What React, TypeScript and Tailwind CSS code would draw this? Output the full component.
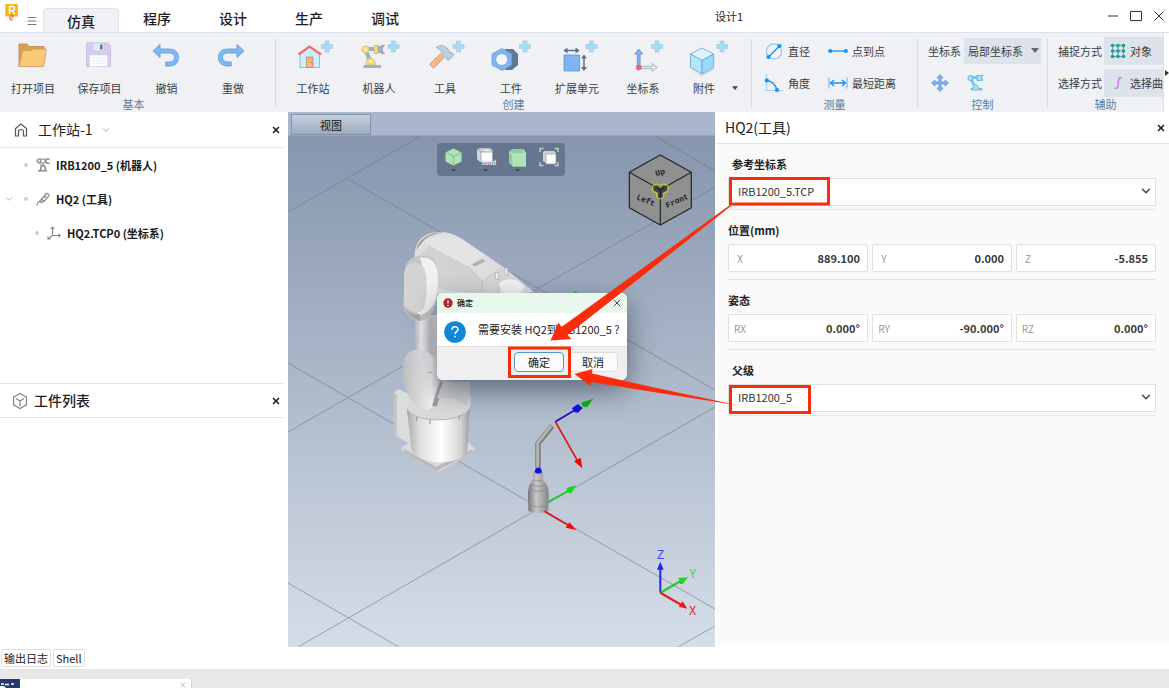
import React from "react";
import { ChevronDown, Menu, X } from "lucide-react";

type Kids = { children: React.ReactNode };

/* ---------- Ribbon icons, all on a 40 x 36 canvas ---------- */

function Plus({ x }: { x: number }) {
  return (
    <path
      transform={`translate(${x} 8.5)`}
      d="M-2-5.5h4v3.5h3.5v4H2v3.5h-4V2h-3.5v-4H-2z"
      fill="#a5dcf5"
      stroke="#a9c9dd"
      strokeWidth=".7"
    />
  );
}

function BigIcon({ children }: Kids) {
  return (
    <svg viewBox="0 0 40 36" className="h-9 w-10 shrink-0 overflow-visible" aria-hidden="true">
      {children}
    </svg>
  );
}

const folderIcon = (
  <BigIcon>
    <path d="M6 6h8l2 2.500h15v6H8.500L6 28.500z" fill="#dda14c" stroke="#b98a4a" strokeWidth=".8" />
    <path d="M9.500 12.500h9l2-1.500h12.800l-2.600 17.500H6z" fill="#fdc873" stroke="#c39a5c" strokeWidth=".8" />
  </BigIcon>
);

const saveIcon = (
  <BigIcon>
    <path d="M6.500 5h21l3 3v20.500h-24z" fill="#d9cbef" stroke="#c2b5dc" strokeWidth=".8" />
    <path d="M13 5h11v8H13z" fill="#dcebf4" stroke="#b5c5d6" strokeWidth=".6" />
    <path d="M20 6.500h2.500v5H20z" fill="#5d7590" />
    <path d="M9.500 17h18v11.500h-18z" fill="#fff" stroke="#cdd5e2" strokeWidth=".6" />
    <path d="M11.500 20h14M11.500 22.500h14M11.500 25h14" stroke="#dfe6ef" strokeWidth=".8" />
  </BigIcon>
);

const turnArrow = "M6 13l7-6.500v4.500h9.500c5.500 0 9 3.500 9 8.500s-3.500 8.500-9 8.500h-3.700v-4h3.500c3.300 0 5.200-1.700 5.200-4.500s-2-4.500-5.200-4.500H13v4.500z";

const undoIcon = (
  <BigIcon>
    <path d={turnArrow} fill="#7fb9f5" stroke="#5a94d2" strokeWidth=".8" />
  </BigIcon>
);

const redoIcon = (
  <BigIcon>
    <path transform="translate(37 0) scale(-1 1)" d={turnArrow} fill="#7fb9f5" stroke="#5a94d2" strokeWidth=".8" />
  </BigIcon>
);

const stationIcon = (
  <BigIcon>
    <path d="M7 16L16.500 9l10 7v13.500H7z" fill="#cdeefb" stroke="#8fb4cc" strokeWidth=".9" />
    <path d="M5.500 16.500l11-8 11.500 8" fill="none" stroke="#ee6b72" strokeWidth="2.200" />
    <path d="M13.500 19h6.500v10.500h-6.500z" fill="#fbb583" stroke="#b98462" strokeWidth=".8" />
    <circle cx="18.500" cy="24.500" r=".6" fill="#8a5a3c" />
    <Plus x={34} />
  </BigIcon>
);

const robotIcon = (
  <BigIcon>
    <path d="M7 11h12M7 13l5 12" stroke="#9fb1c2" strokeWidth="4" />
    <path d="M19 8.500h2c1-1 2.500-1.500 4.500-1l-2 2.400v3.200l2 2.400c-2 .5-3.500 0-4.500-1h-2z" fill="#9fb1c2" stroke="#8fa3b5" strokeWidth=".8" />
    <path d="M15 7.500h4v8h-4z" fill="#f6dc7c" stroke="#c9b268" strokeWidth=".7" />
    <circle cx="6.500" cy="11.500" r="3.600" fill="#f6dc7c" stroke="#c9b268" strokeWidth=".7" />
    <circle cx="6.500" cy="11.500" r="1.100" fill="#fff" />
    <path d="M7 27c0-5 2-7 4.500-7s4.500 2 5 7z" fill="#f6dc7c" stroke="#c9b268" strokeWidth=".7" />
    <circle cx="11.500" cy="23.500" r="1.100" fill="#fff" />
    <path d="M4.500 27h17.500v3H4.500z" fill="#9fb1c2" />
    <Plus x={34.5} />
  </BigIcon>
);

const toolIcon = (
  <BigIcon>
    <path d="M15.500 15.500l4 4L8.500 30.300 4.500 26.500z" fill="#fbb583" stroke="#cf9670" strokeWidth=".8" />
    <path d="M11 9.500c3-2.500 8-2.500 11 .5l3 4.500 2.500.5 1 2-4.500 5-2.500-.5-.5-2.500-3.500-3c-1-3-3.500-5.500-6.500-6.500z" fill="#b9d1dd" stroke="#8ea9b8" strokeWidth=".8" />
    <Plus x={33.5} />
  </BigIcon>
);

const partIcon = (
  <BigIcon>
    <path d="M14 11h8l5 5v11l-6 5h-7z" fill="#5f7a96" />
    <path d="M11 10.500l9.500 5.500v11L11 32.500 1 27V16z" fill="#7fb5f5" stroke="#6c9fdc" strokeWidth=".8" />
    <circle cx="10.800" cy="21.500" r="6" fill="#f2f5fa" stroke="#6f9fd6" strokeWidth=".8" />
    <Plus x={34} />
  </BigIcon>
);

const unitIcon = (
  <BigIcon>
    <path d="M7 17h15.500v16H7z" fill="#7fb5f5" stroke="#6590c4" strokeWidth=".8" />
    <path d="M7.500 12.500h14M27 18v13.500" stroke="#587089" strokeWidth="1.500" />
    <path d="M6.500 12.500L10.500 9.500v6zM22.500 12.500l-4-3v6zM27 16.500l-3 4h6zM27 33l-3-4h6z" fill="#587089" />
    <Plus x={34.5} />
  </BigIcon>
);

const frameIcon = (
  <BigIcon>
    <path d="M14.300 29V16h-2.600L15.700 11l4 5h-2.600v13z" fill="#7fb5f5" stroke="#5c8dc8" strokeWidth=".8" />
    <path d="M18 28.300h11v-2.800l5.500 4-5.500 4v-2.800H18z" fill="#e2ebf2" stroke="#94a9b8" strokeWidth=".8" />
    <circle cx="15.700" cy="29.700" r="2.400" fill="#f4606b" stroke="#d94f5b" strokeWidth=".6" />
    <Plus x={34} />
  </BigIcon>
);

const accessoryIcon = (
  <BigIcon>
    <path d="M17.500 37l12-6.500 1 1L17.500 38.500 6 32z" fill="#c9ced4" opacity=".7" />
    <path d="M18 10l11.700 6L18 22.500 6.500 16z" fill="#dff4fd" stroke="#6ba3c2" strokeWidth=".8" />
    <path d="M6.500 16L18 22.500V36L6.500 29.500z" fill="#b5e5fb" stroke="#6ba3c2" strokeWidth=".8" />
    <path d="M29.700 16L18 22.500V36l11.700-6.500z" fill="#98d8f8" stroke="#6ba3c2" strokeWidth=".8" />
    <Plus x={38} />
  </BigIcon>
);

function SmallIcon({ children }: Kids) {
  return (
    <svg viewBox="0 0 20 20" className="size-5 shrink-0" aria-hidden="true">
      {children}
    </svg>
  );
}

const diameterIcon = (
  <SmallIcon>
    <circle cx="10" cy="10.500" r="7.700" fill="none" stroke="#8fc4ee" strokeWidth="1.200" />
    <path d="M4.500 16L15.500 5" stroke="#1492f5" strokeWidth="1.400" />
    <circle cx="4.500" cy="16" r="2.100" fill="#1492f5" />
    <circle cx="15.500" cy="5" r="2.100" fill="#1492f5" />
  </SmallIcon>
);

const angleIcon = (
  <SmallIcon>
    <path d="M2.500 1v16.500H19" fill="none" stroke="#a9cdec" strokeWidth="1.200" />
    <path d="M2.500 7.500C9 8.500 12 11.500 13 17.500" fill="none" stroke="#1492f5" strokeWidth="1.400" />
    <circle cx="2.800" cy="7.500" r="2.100" fill="#1492f5" />
    <circle cx="13" cy="17" r="2.100" fill="#1492f5" />
  </SmallIcon>
);

const pointIcon = (
  <SmallIcon>
    <path d="M2 10h16" stroke="#1492f5" strokeWidth="1.300" />
    <circle cx="2.200" cy="10" r="2.100" fill="#1492f5" />
    <circle cx="17.800" cy="10" r="2.100" fill="#1492f5" />
  </SmallIcon>
);

const distanceIcon = (
  <SmallIcon>
    <path d="M1 4.500v11M19 4.500v11" stroke="#7fb9e8" strokeWidth="1.200" />
    <path d="M3 10h14M6 7l-3.500 3L6 13M14 7l3.500 3-3.500 3" fill="none" stroke="#1492f5" strokeWidth="1.300" />
  </SmallIcon>
);

const moveIcon = (
  <SmallIcon>
    <path
      d="M10 1.500l3 3.500h-2v4h4V7l3.500 3-3.500 3v-2h-4v4h2l-3 3.500L7 15h2v-4H5v2l-3.500-3L5 7v2h4V5H7z"
      fill="#7fb5f0"
      stroke="#5f94d0"
      strokeWidth=".8"
    />
  </SmallIcon>
);

const jogIcon = (
  <SmallIcon>
    <path d="M5 4.500h10M5 6l4 8" stroke="#7cc6ea" strokeWidth="2.800" />
    <path d="M5 17v-1.500h2c0-3 1-4 2.500-4s2.500 1 2.800 4H16V17z" fill="#a6def5" stroke="#5eaed6" strokeWidth=".8" />
    <circle cx="4.500" cy="5" r="2.600" fill="#a6def5" stroke="#5eaed6" strokeWidth=".9" />
    <path d="M11 2.500h3.500l2.500-.5-1.500 2.500 1.500 2.500-3 .5h-3z" fill="#a6def5" stroke="#5eaed6" strokeWidth=".9" />
  </SmallIcon>
);

const gridIcon = (
  <svg viewBox="0 0 16 16" className="size-4 shrink-0" aria-hidden="true">
    <path d="M2.500 2.500h11v11h-11zM8 2.500v11M2.500 8h11" fill="none" stroke="#58a3b0" strokeWidth="1" />
    {[2.5, 8, 13.5].map((y) => [2.5, 8, 13.5].map((x) => <circle key={`${x}-${y}`} cx={x} cy={y} r="1.800" fill="#14a395" />))}
  </svg>
);

const curveIcon = (
  <svg viewBox="0 0 16 16" className="size-4 shrink-0" aria-hidden="true">
    <path d="M4.500 13c3 1 4-.5 3.800-5-.2-4.500.7-6 3.700-5" fill="none" stroke="#cf86ee" strokeWidth="1.700" />
  </svg>
);

/* ---------- Ribbon ---------- */

function RibbonButton({ icon, label, size }: { icon: React.ReactNode; label: string; size: string }) {
  return (
    <button type="button" className={`flex shrink-0 flex-col items-center ${size}`}>
      {icon}
      <span className="mt-1.5 text-[11px] leading-4 whitespace-nowrap text-[#3c3c3c]">{label}</span>
    </button>
  );
}

function Group({ label, className, children }: Kids & { label: string; className: string }) {
  return (
    <section className={`flex shrink-0 flex-col justify-between ${className}`}>
      <div className="h-[58px]">{children}</div>
      <p className="text-center text-[11px] leading-4 text-[#62799c]">{label}</p>
    </section>
  );
}

function Separator() {
  return <div className="mt-1.5 h-[68px] w-px shrink-0 bg-[#cfdceb]" />;
}

function MeasureButton({ icon, label }: { icon: React.ReactNode; label: string }) {
  return (
    <button type="button" className="flex h-8 items-center gap-1 text-[11px] whitespace-nowrap text-[#3c3c3c]">
      {icon}
      {label}
    </button>
  );
}

function Caret({ className }: { className: string }) {
  return (
    <svg viewBox="0 0 8 5" className={className} aria-hidden="true">
      <path d="M0 0h8L4 5z" fill="currentColor" />
    </svg>
  );
}

function Ribbon() {
  return (
    <div className="flex h-20 shrink-0 overflow-hidden border-t border-[#dbe2ee] bg-[#f0f1f5]">
      <Group label="基本" className="w-[275px] pt-[5px] pr-2">
        <div className="flex">
          <RibbonButton icon={folderIcon} label="打开项目" size="w-[66px]" />
          <RibbonButton icon={saveIcon} label="保存项目" size="w-[67px]" />
          <RibbonButton icon={undoIcon} label="撤销" size="w-[67px]" />
          <RibbonButton icon={redoIcon} label="重做" size="w-[66px]" />
        </div>
      </Group>
      <Separator />
      <Group label="创建" className="w-[475px] pt-[5px]">
        <div className="flex pl-1">
          <RibbonButton icon={stationIcon} label="工作站" size="w-[66px]" />
          <RibbonButton icon={robotIcon} label="机器人" size="w-[66px]" />
          <RibbonButton icon={toolIcon} label="工具" size="w-[66px]" />
          <RibbonButton icon={partIcon} label="工件" size="w-[66px]" />
          <RibbonButton icon={unitIcon} label="扩展单元" size="w-[66px]" />
          <RibbonButton icon={frameIcon} label="坐标系" size="w-[66px]" />
          <RibbonButton icon={accessoryIcon} label="附件" size="w-14" />
          <button type="button" aria-label="更多附件" className="flex items-end pb-1.5 text-[#444]">
            <Caret className="h-1 w-1.5" />
          </button>
        </div>
      </Group>
      <Separator />
      <Group label="测量" className="w-[165px] pt-0.5">
        <div className="grid grid-cols-[64px_1fr] pl-3">
          <MeasureButton icon={diameterIcon} label="直径" />
          <MeasureButton icon={pointIcon} label="点到点" />
          <MeasureButton icon={angleIcon} label="角度" />
          <MeasureButton icon={distanceIcon} label="最短距离" />
        </div>
      </Group>
      <Separator />
      <Group label="控制" className="w-[129px] pt-0.5">
        <div className="flex h-8 items-center gap-[3px] pl-2.5 text-[11px] whitespace-nowrap text-[#3c3c3c]">
          <label htmlFor="frame">坐标系</label>
          <span className="relative">
            <select id="frame" className="block h-[26px] w-[77px] appearance-none bg-[#dde3eb] pl-1">
              <option>局部坐标系</option>
            </select>
            <Caret className="pointer-events-none absolute top-2.5 right-0.5 h-[5px] w-2 text-[#666]" />
          </span>
        </div>
        <div className="flex h-8 items-center gap-4 pl-3">
          <button type="button" aria-label="移动">{moveIcon}</button>
          <button type="button" aria-label="点动">{jogIcon}</button>
        </div>
      </Group>
      <Separator />
      <Group label="辅助" className="min-w-0 flex-1 pt-0.5">
        <div className="text-[11px] whitespace-nowrap text-[#3c3c3c]">
          <div className="flex h-8 items-center pl-2.5">
            <span className="w-[46px] shrink-0">捕捉方式</span>
            <button type="button" className="flex h-7 min-w-0 flex-1 items-center gap-1 bg-[#dde3eb] pl-1.5">
              {gridIcon}对象
            </button>
          </div>
          <div className="flex h-8 items-center pl-2.5">
            <span className="w-[46px] shrink-0">选择方式</span>
            <button type="button" className="flex h-7 min-w-0 flex-1 items-center gap-1 bg-[#dde3eb] pl-1.5">
              {curveIcon}选择曲
            </button>
          </div>
        </div>
      </Group>
      <button type="button" aria-label="向右滚动" className="z-10 flex w-1.5 shrink-0 items-center justify-end border-l border-[#dbe2ee] bg-white">
        <svg viewBox="0 0 4 6" className="h-1.5 w-1" aria-hidden="true">
          <path d="M0 0l4 3-4 3z" fill="#333" />
        </svg>
      </button>
    </div>
  );
}

/* ---------- Title bar ---------- */

function TitleBar() {
  return (
    <header className="flex h-8 shrink-0 items-end">
      <svg viewBox="0 0 16 24" className="ml-1 h-6 w-4 self-start pt-1" aria-hidden="true">
        <path d="M0 0h15v15H0z" fill="#f7b614" />
        <path d="M5 12V3h3.500q2.500 0 2.500 2.500T8.500 8H5M8 8l3 4" fill="none" stroke="#fff" strokeWidth="1.800" />
        <path d="M6 18c4-2 4-5 1-4s-2 7 2 5" fill="none" stroke="#e4393c" strokeWidth="1.200" />
      </svg>
      <button type="button" aria-label="菜单" className="mr-[5px] ml-1.5 pb-[5px]">
        <Menu className="h-3 w-3 text-[#777]" strokeWidth={2} />
      </button>
      <nav className="flex items-end text-[14px] font-medium text-[#1c1c1c]">
        <button type="button" className="-mb-px h-[25px] w-[76px] rounded-t-sm border border-b-0 border-[#dbe2ee] bg-[#f0f1f5] leading-6">仿真</button>
        <button type="button" className="h-6 w-[76px] pb-1">程序</button>
        <button type="button" className="h-6 w-[76px] pb-1">设计</button>
        <button type="button" className="h-6 w-[76px] pb-1">生产</button>
        <button type="button" className="h-6 w-[76px] pb-1">调试</button>
      </nav>
      <h1 className="flex-1 self-center pr-[72px] text-center text-[11px] text-[#222]">设计1</h1>
      <div className="flex w-[62px] items-center gap-[11px] self-center text-[#333]">
        <button type="button" aria-label="最小化">
          <svg viewBox="0 0 12 12" className="size-3" aria-hidden="true">
            <path d="M1 6h10" stroke="currentColor" />
          </svg>
        </button>
        <button type="button" aria-label="最大化">
          <svg viewBox="0 0 12 12" className="size-3" aria-hidden="true">
            <path d="M.500 1.500h11v9H.500z" fill="none" stroke="currentColor" />
          </svg>
        </button>
        <button type="button" aria-label="关闭窗口">
          <svg viewBox="0 0 12 12" className="size-3" aria-hidden="true">
            <path d="M1.500 1.500l9 9M10.500 1.500l-9 9" stroke="currentColor" />
          </svg>
        </button>
      </div>
    </header>
  );
}

/* ---------- Left column ---------- */

function CloseButton({ label }: { label: string }) {
  return (
    <button type="button" aria-label={label}>
      <X className="size-2.5 text-[#222]" strokeWidth={4} />
    </button>
  );
}

const homeOutline = (
  <svg viewBox="0 0 14 14" className="size-3.5" aria-hidden="true">
    <path d="M1.500 13V5.500L7 1l5.500 4.500V13h-3V9a2.500 2.500 0 0 0-5 0v4z" fill="none" stroke="#555" strokeWidth="1.200" />
  </svg>
);

const cubeOutline = (
  <svg viewBox="0 0 16 18" className="h-[18px] w-4" aria-hidden="true">
    <path d="M8 1.500l6.500 3.700v7.600L8 16.500l-6.500-3.700V5.200zM4 6.500L8 9l4-2.500M8 9v5" fill="none" stroke="#888" strokeWidth="1.300" />
  </svg>
);

const armOutline = (
  <svg viewBox="0 0 14 14" className="size-3.5 shrink-0" aria-hidden="true">
    <path d="M2 12.700h9M4.500 12l.5-2.500M9.500 12l-.500-2.500a2 2 0 0 0-4 0" fill="none" stroke="#888" strokeWidth="1.500" />
    <path d="M3.500 5l3 4M5.500 4l2.500 4M3 1.200h6v3.600H5.500" fill="none" stroke="#999" strokeWidth="1.200" />
    <circle cx="3" cy="3" r="2" fill="#ddd" stroke="#888" strokeWidth="1.200" />
    <path d="M13.500 1.500a2.200 2.200 0 1 0 0 3.300" fill="none" stroke="#888" strokeWidth="1.400" />
  </svg>
);

const torchOutline = (
  <svg viewBox="0 0 14 14" className="size-3.5 shrink-0" aria-hidden="true">
    <path d="M1 13.500l.5-2.500 4-3.500M5.500 7.200L9.700 1.800c1.500-1.300 4 .8 3 2.500L7.800 9.500zM5.500 7l2.500 2.500-3 1L4 9.500zM8.300 6l2-2.300" fill="none" stroke="#888" strokeWidth="1.200" />
  </svg>
);

const axesOutline = (
  <svg viewBox="0 0 14 14" className="size-3.5 shrink-0" aria-hidden="true">
    <path d="M5.500 1v8.500H13M5.500 9.500L1 13M3.700 3l1.800-2 1.800 2M11.500 7.700L13.200 9.500l-1.700 1.800M1 10.500V13h2.700" fill="none" stroke="#888" strokeWidth="1.100" />
  </svg>
);

function TreeRow({ icon, label, className, open }: { icon: React.ReactNode; label: string; className: string; open?: boolean }) {
  return (
    <li className={`flex h-[34px] items-center ${className}`}>
      <span className="w-5 shrink-0">{open && <ChevronDown className="size-2.5 text-[#aaa]" strokeWidth={2} />}</span>
      <span className="mr-2 size-1 shrink-0 rounded-full bg-[#cfcfcf]" />
      {icon}
      <span className="ml-1.5 text-[11px] font-bold whitespace-nowrap text-[#1a1a1a]">{label}</span>
    </li>
  );
}

function LeftColumn() {
  return (
    <aside className="mr-[5px] flex w-[283px] shrink-0 flex-col">
      <section className="h-[271px]">
        <header className="flex h-9 items-center border-b border-[#e2e2e2] pr-0.5 pl-3.5">
          {homeOutline}
          <h2 className="mr-2 ml-2.5 text-[14px] text-[#222]">工作站-1</h2>
          <ChevronDown className="mr-auto size-2.5 text-[#999]" strokeWidth={2} />
          <CloseButton label="关闭工作站" />
        </header>
        <ul>
          <TreeRow icon={armOutline} label="IRB1200_5 (机器人)" className="pl-1" />
          <TreeRow icon={torchOutline} label="HQ2 (工具)" className="pl-1" open />
          <TreeRow icon={axesOutline} label="HQ2.TCP0 (坐标系)" className="pl-[15px]" />
        </ul>
      </section>
      <section>
        <header className="flex h-[35px] items-center border-y border-[#e2e2e2] pr-0.5 pl-3">
          {cubeOutline}
          <h2 className="mr-auto ml-1.5 text-[14px] font-medium text-[#222]">工件列表</h2>
          <CloseButton label="关闭工件列表" />
        </header>
      </section>
    </aside>
  );
}

/* ---------- 3D view ---------- */

function Robot() {
  return (
    <g transform="translate(380 220) scale(.33333)">
      {/* base */}
      <path d="M62 684l25-16 180 0 18 17-6 12-100 57-12 0-98-60z" fill="#d9d9da" />
      <path d="M72 688l97 52 108-52 2 8-110 58-97-58z" fill="#b9b9ba" />
      <path d="M42 516l14-8 40 18v140l-14 2-41-26z" fill="#dcdcdd" />
      <path d="M42 516l8 6v130l-9-7z" fill="#c3c3c5" />
      <path d="M80 560c20 50 170 50 190-10l-8 140c-10 50-160 50-168-6z" fill="url(#barrel)" />
      <path d="M76 555c-6-40 60-70 120-70 50 0 80 20 76 60 0 30-20 50-90 55-70 2-100-20-106-45z" fill="#dadadb" />
      <path d="M80 565c20 44 160 48 190 0" fill="none" stroke="#b5b5b6" strokeWidth="3" />
      <path d="M84 572v14M110 590v14M150 598v14M238 586v14" stroke="#a5a5a7" strokeWidth="4" />
      <path d="M180 485l-30 70 20 5 24-75z" fill="#9c9c9e" />
      <path d="M190 485h80v40c-4 40-20 30-30 20s-60-10-70-10z" fill="#cfcfd0" />
      {/* upright */}
      <path d="M104 285h68v140h-68z" fill="url(#post)" />
      <path d="M70 430c8-50 60-50 90-20 20 20 20 80 8 110-10 30-10 50-30 50-40-4-50-40-62-70-10-20-8-50-6-70z" fill="url(#joint)" />
      <path d="M145 460q6-8 12 0" fill="none" stroke="#999" strokeWidth="2" />
      {/* forearm */}
      <path d="M104 110c0-40 20-74 76-74 30 0 60 14 80 30l110 75 92 75-60 8H175l-70-60z" fill="#dededf" />
      <path d="M108 90c10-34 40-54 80-52-30 4-50 12-62 30z" fill="#9d9d9f" />
      <path d="M126 70c20-20 60-30 110-12l75 44-50 32-120-60z" fill="#e4e4e5" />
      <path d="M140 74l122 62 46-30" fill="none" stroke="#f6f6f6" strokeWidth="2" />
      <path d="M110 110c30-20 40-30 30-40 40 30 80 40 122 68l46 48-4 34-120-10z" fill="#d2d2d3" />
      <path d="M308 185l60-40 80 60-60 20h-84z" fill="#d6d6d7" />
      <path d="M358 190c20-20 60-14 76 10l-10 20h-60z" fill="#f4f4f4" />
      <path d="M262 138l46 48M308 184l58-42M306 185v32" fill="none" stroke="#b0b0b2" strokeWidth="2" />
      <path d="M278 134l30-16 6 6-30 14z" fill="#b5b5b6" stroke="#8f8f91" strokeWidth="1.500" />
      <path d="M346 178v-20h10v20zM374 162v-18h9v22z" fill="#eee" stroke="#aaa" strokeWidth="2" />
      {/* elbow cover */}
      <path d="M76 140c8-30 50-44 84-22 20 20 20 100 4 140-6 30-30 50-56 44-20-8-38-30-38-50z" fill="#c5c5c6" />
      <path d="M120 112c50 0 56 33 54 83-2 50-16 76-50 90l-14-6c24-30 26-130 10-164z" fill="#f1f1f1" />
      <path d="M72 160c6-40 50-40 62-12 8 20 8 80 0 110-10 30-40 20-62-2z" fill="#d4d4d5" />
      <path d="M72 258c10 24 30 44 50 44l-4-20c-20 4-36-8-46-24z" fill="#a7a7a9" />
    </g>
  );
}

function Torch() {
  return (
    <g transform="translate(500 380) scale(.33333)">
      <path d="M114 265v-75l42-52" fill="none" stroke="#777" strokeWidth="16" />
      <path d="M113 265v-76l40-51" fill="none" stroke="#b5b3b1" strokeWidth="9" />
      <path d="M99 276h30v25c16 14 20 28 16 74v18c-14 8-44 8-60 0v-18c-3-46 0-60 14-74z" fill="url(#body)" />
      <path d="M99 300q15 6 30 0M90 315q24 8 50 0M86 330q28 8 58 0M85 376q30 10 60 0" fill="none" stroke="#858585" strokeWidth="2" />
      <path d="M104 276c0-16 20-20 22 0-4 6-18 6-22 0z" fill="#0d10e8" />
      <path d="M166 125l70-42" stroke="#1212c0" strokeWidth="5" />
      <path d="M244 68l36-12-18 24-14 0z" fill="#10b414" />
      <path d="M246 70l12-8 12 8-8 10-12 0z" fill="#10b414" />
      <path d="M216 84l18-12 14 12-14 14-12-2z" fill="#0d10e8" />
      <path d="M166 125l68 120" stroke="#e01414" strokeWidth="5" />
      <path d="M222 244l20-11 5 32z" fill="#f00808" />
      <path d="M144 366l66-36" stroke="#14cc1c" strokeWidth="5" />
      <path d="M200 324l28-8-14 24-10-2z" fill="#0ddb14" />
      <path d="M133 394l72 42" stroke="#e01414" strokeWidth="5" />
      <path d="M208 427l21 23-32-7z" fill="#f00808" />
      <path d="M481 638v-75" stroke="#2424e8" strokeWidth="6" />
      <path d="M481 545l10 24h-20z" fill="#2424f0" />
      <path d="M481 638l60-34" stroke="#22cc2a" strokeWidth="7" />
      <path d="M536 594l28-2-16 20-8 0z" fill="#22d42a" />
      <path d="M481 638l62 36" stroke="#e02020" strokeWidth="7" />
      <path d="M548 664l14 22-26-6z" fill="#f01818" />
    </g>
  );
}

function ViewCube() {
  return (
    <g>
      <g transform="translate(425 130) scale(.33333)">
        <path d="M706 75l93 52v106l-93 52-93-52V127z" fill="#8f9090" stroke="#222" strokeWidth="3.500" strokeLinejoin="round" />
        <path d="M613 127l93 52 93-52M706 179v106" fill="none" stroke="#222" strokeWidth="3.500" />
        <path d="M684 172l12-6 10 8 10-8 12 6-3 10-12 6v16h-14v-16l-12-6z" fill="#444" />
        <path d="M683 182c-6-16 12-26 23-15 11-11 30-2 23 15-3 7-12 5-13 8 4 14-6 16-10 16s-14-2-10-16c-1-3-10-1-13-8z" fill="none" stroke="#d8d222" strokeWidth="3" />
        <path d="M706 180l-12-8M706 180l12-8M706 180v20" stroke="#111" strokeWidth="3" />
      </g>
      <g fill="#1c1c1c" className="font-['Liberation_Mono',monospace] text-[8px] font-bold">
        <text x="636" y="199" transform="rotate(22 636 199)">Left</text>
        <text x="667" y="208" transform="rotate(-24 667 208)">Front</text>
        <text x="656" y="176" transform="rotate(-14 656 176)">Up</text>
      </g>
      <g className="font-['Liberation_Mono',monospace] text-[12px]">
        <text x="657" y="559" fill="#4040f0">Z</text>
        <text x="689" y="578" fill="#2ee040">Y</text>
        <text x="689" y="615" fill="#f02828">X</text>
      </g>
    </g>
  );
}

function Canvas() {
  return (
    <svg viewBox="288 136 427 511" preserveAspectRatio="xMaxYMin slice" className="absolute inset-0 h-full w-full" role="img" aria-label="三维视图">
      <defs>
        <linearGradient id="sky" x1="0" y1="0" x2="0" y2="1">
          <stop offset="0" stopColor="#8796ae" />
          <stop offset="1" stopColor="#d5dde7" />
        </linearGradient>
        <linearGradient id="barrel">
          <stop offset="0" stopColor="#a8a8aa" />
          <stop offset=".2" stopColor="#dcdcdc" />
          <stop offset=".55" stopColor="#fff" />
          <stop offset=".85" stopColor="#d5d5d6" />
          <stop offset="1" stopColor="#9e9ea0" />
        </linearGradient>
        <linearGradient id="post">
          <stop offset="0" stopColor="#b5b5b7" />
          <stop offset=".3" stopColor="#ececec" />
          <stop offset=".7" stopColor="#c5c5c7" />
          <stop offset="1" stopColor="#dedede" />
        </linearGradient>
        <linearGradient id="joint">
          <stop offset="0" stopColor="#bdbdbf" />
          <stop offset=".5" stopColor="#dededf" />
          <stop offset=".8" stopColor="#f2f2f2" />
          <stop offset="1" stopColor="#cfcfd0" />
        </linearGradient>
        <linearGradient id="body">
          <stop offset="0" stopColor="#77777a" />
          <stop offset=".4" stopColor="#c8c6c6" />
          <stop offset="1" stopColor="#858587" />
        </linearGradient>
      </defs>
      <path d="M-600 136H715v511H-600z" fill="url(#sky)" />
      <path
        d="M288 212L421 136M348 179L715 390M655 136l60 35M288 363l427 246M288 432L715 187M715 407L298 647M288 583l111 64M678 647l37-21"
        stroke="#6f7b8a"
        strokeWidth="1"
        opacity=".6"
      />
      <Robot />
      <path d="M569 294l7-3 2 3z" fill="#22cc2a" />
      <Torch />
      <ViewCube />
    </svg>
  );
}

function ViewToolbar() {
  return (
    <div role="toolbar" aria-label="视图工具" className="absolute top-[31px] right-[150px] flex h-[33px] w-32 rounded bg-[#66768f]">
      <button type="button" aria-label="方向" className="w-8">
        <svg viewBox="0 0 32 33" aria-hidden="true">
          <path d="M16.500 5.500l8 4v9l-8 4-8-4v-9z" fill="#aee3b8" />
          <path d="M8.500 9.500l8 4 8-4M16.500 13.500v9" fill="none" stroke="#6fae80" strokeWidth=".9" strokeDasharray="2 1" />
          <path d="M14 26h5l-2.500 3z" fill="#3c4757" />
        </svg>
      </button>
      <button type="button" aria-label="实体" className="w-8">
        <svg viewBox="0 0 32 33" aria-hidden="true">
          <path d="M8 6l3-1h10l3 3v9l-13 2-3-3z" fill="#d4d6da" />
          <path d="M12 9h11.500v10H12zM8 6l4 3M8.500 6H20l3.500 3" fill="#fff" stroke="#8b8f97" strokeWidth=".7" />
          <text x="12" y="22" fill="#eef1f5" className="text-[6px] font-bold">Solid</text>
          <path d="M14 26h5l-2.500 3z" fill="#3c4757" />
        </svg>
      </button>
      <button type="button" aria-label="显示" className="w-8">
        <svg viewBox="0 0 32 33" aria-hidden="true">
          <path d="M8 8.500L11 6h11l3 3.500v14H12L8 20z" fill="#8fcf9e" />
          <path d="M12 11h13v12.500H12z" fill="#aee3b8" />
          <path d="M8 8.500l4 2.500h13l-3-4.500M12 11v12.500" fill="none" stroke="#c4ecca" strokeWidth=".9" />
          <path d="M14 26h5l-2.500 3z" fill="#3c4757" />
        </svg>
      </button>
      <button type="button" aria-label="适应窗口" className="w-8">
        <svg viewBox="0 0 32 33" aria-hidden="true">
          <path d="M7 9V5.500h3.500M21.500 5.500H25V9M25 19v3.500h-3.500M10.500 22.500H7V19" fill="none" stroke="#aee3b8" strokeWidth="1.300" />
          <path d="M10 9l2-1h9l2 2-9 11-4-3z" fill="#d0d2d6" />
          <path d="M13 11h10v10H13z" fill="#fff" stroke="#8b8f97" strokeWidth=".6" />
        </svg>
      </button>
    </div>
  );
}

function ConfirmDialog() {
  return (
    <div role="dialog" aria-labelledby="confirm-title" className="absolute top-[181px] right-[88px] w-[190px] overflow-hidden rounded-md bg-white shadow-[0_10px_28px_rgba(40,50,65,0.6)]">
      <div className="flex h-5 items-center gap-1 bg-[#e9f6ec] pr-1 pl-1.5">
        <svg viewBox="0 0 10 10" className="size-2.5" aria-hidden="true">
          <circle cx="5" cy="5" r="4.700" fill="#b3202c" />
          <path d="M5 2v3.500M5 6.700V8" stroke="#fff" strokeWidth="1.200" />
        </svg>
        <h2 id="confirm-title" className="mr-auto text-[8px] leading-4 font-medium text-[#111]">确定</h2>
        <button type="button" aria-label="关闭对话框">
          <X className="size-3 text-[#444]" strokeWidth={2} />
        </button>
      </div>
      <div className="flex h-[33px] items-center pt-1 pl-[7px]">
        <svg viewBox="0 0 22 22" className="size-[22px] shrink-0" aria-hidden="true">
          <circle cx="11" cy="11" r="10.800" fill="#0f86d8" />
          <path d="M8 8.700c0-4 6-4 6-.4 0 2.300-3 2.300-3 4.700M11 14.700v1.600" fill="none" stroke="#fff" strokeWidth="1.500" />
        </svg>
        <p className="ml-3 pb-1.5 text-[11px] leading-4 whitespace-nowrap text-[#222]">需要安装 HQ2到IRB1200_5 ?</p>
      </div>
      <div className="flex h-[34px] items-start justify-end gap-1 border-t border-[#e0e0e0] bg-[#efefef] pt-[5px] pr-[9px] text-[11px] leading-4 text-[#222]">
        <button type="button" className="h-5 w-[50px] rounded-sm border border-[#4a9ad8] bg-[#fbfbfb]">确定</button>
        <button type="button" className="h-5 w-[50px] rounded-sm border border-[#dcdcdc] bg-[#fbfbfb]">取消</button>
      </div>
    </div>
  );
}

function Scene() {
  return (
    <main className="relative flex min-w-0 flex-1 flex-col bg-[#a9b6cb]">
      <div className="flex h-6 shrink-0 items-end border-b border-[#97a5bb] pl-[3px]">
        <button type="button" className="h-[21px] w-20 border border-[#8494ab] bg-linear-to-b from-[#c6d1de] to-[#9dabc0] text-[11px] leading-4 font-medium text-[#333]">
          视图
        </button>
      </div>
      <div className="relative flex-1 overflow-hidden">
        <Canvas />
      </div>
      <ViewToolbar />
      <ConfirmDialog />
    </main>
  );
}

/* ---------- Properties ---------- */

function Picker({ id, label, value }: { id: string; label: string; value: string }) {
  return (
    <section className="border-b border-[#e6e6e6] pt-3 pb-[3px]">
      <label htmlFor={id} className="mb-1.5 block pl-1 text-[11px] leading-4 font-bold text-[#222]">{label}</label>
      <div className="relative">
        <select id={id} className="block h-7 w-full appearance-none border border-[#e0e0e0] bg-white pb-0.5 pl-[9px] text-[11px] text-[#333]">
          <option>{value}</option>
        </select>
        <ChevronDown className="pointer-events-none absolute top-1.5 right-[3px] size-3.5 text-[#444]" strokeWidth={2.5} />
      </div>
    </section>
  );
}

function Triple({ label, fields }: { label: string; fields: [string, string][] }) {
  return (
    <fieldset className="border-b border-[#e6e6e6] pt-3 pb-[7px]">
      <legend className="float-left mb-1.5 w-full text-[11px] leading-4 font-bold text-[#222]">{label}</legend>
      <div className="clear-both grid grid-cols-3 gap-1">
        {fields.map(([name, value]) => (
          <label key={name} className="flex h-7 items-center rounded-xs border border-[#e0e0e0] bg-white pr-[7px] pl-[3px] text-[10px] text-[#999]">
            <span className="w-4 shrink-0 text-center">{name}</span>
            <input type="text" defaultValue={value} className="w-full min-w-0 bg-transparent text-right text-[11px] font-bold text-[#3a3a3a] outline-none" />
          </label>
        ))}
      </div>
    </fieldset>
  );
}

function Properties() {
  return (
    <aside className="w-[454px] shrink-0 pl-0.5">
      <header className="flex h-8 items-center justify-between border-b border-[#e2e2e2] pr-[3px] pl-2">
        <h2 className="text-[14px] text-[#222]">HQ2(工具)</h2>
        <CloseButton label="关闭属性" />
      </header>
      <form className="h-[500px] bg-[#fafafa] pr-[13px] pl-[11px]">
        <Picker id="ref-frame" label="参考坐标系" value="IRB1200_5.TCP" />
        <Triple label="位置(mm)" fields={[["X", "889.100"], ["Y", "0.000"], ["Z", "-5.855"]]} />
        <Triple label="姿态" fields={[["RX", "0.000°"], ["RY", "-90.000°"], ["RZ", "0.000°"]]} />
        <Picker id="parent" label="父级" value="IRB1200_5" />
      </form>
    </aside>
  );
}

/* Red call-outs drawn over the view and the properties. */
function Annotations() {
  return (
    <svg viewBox="469 112 700 535" className="pointer-events-none absolute top-0 right-0 h-[535px] w-[700px]" aria-hidden="true">
      <g fill="none" stroke="#fb2c0b" strokeWidth="3">
        <path d="M730.500 178.500h98v25.500h-98zM730.500 386.500h79v26h-79zM509.500 348h60v28.500h-60z" />
      </g>
      <path d="M550.500 340.500l8-18 3 4.500L730 205l1 1L567.500 335l4 4z" fill="#fb2c0b" />
      <path d="M574.500 374l18-5-.5 4.500 60 13.500 87 18.500-92-14.500-56-9-.5 4z" fill="#fb2c0b" />
    </svg>
  );
}

export default function App() {
  return (
    <div className="flex h-screen flex-col overflow-hidden bg-white font-['Noto_Sans_CJK_SC',sans-serif] text-[#222]">
      <TitleBar />
      <Ribbon />
      <div className="relative flex min-h-0 flex-1">
        <LeftColumn />
        <Scene />
        <Properties />
        <Annotations />
      </div>
      <div className="flex h-[22px] shrink-0 items-center gap-0.5 pl-px text-[11px] leading-4">
        <button type="button" className="rounded-xs border border-[#dedede] px-0.5">输出日志</button>
        <button type="button" className="rounded-xs border border-[#dedede] px-0.5">Shell</button>
      </div>
      <footer className="flex h-[19px] shrink-0 items-end bg-[#e8e8e8]">
        <div className="flex h-[9px] w-48 items-start justify-between border-r border-[#d5d5d5] bg-white">
          <svg viewBox="0 0 20 9" className="h-[9px] w-5" aria-hidden="true">
            <path d="M0 0h20v9H0z" fill="#243b6b" />
            <path d="M1 5h3M5 5.500h4M11 5h3" stroke="#fff" strokeWidth="1.500" />
            <path d="M0 7h4l2 2H0z" fill="#fff" />
          </svg>
          <button type="button" aria-label="关闭预览" className="pt-0.5 pr-1">
            <X className="size-2 text-[#bbb]" strokeWidth={2.5} />
          </button>
        </div>
      </footer>
    </div>
  );
}
